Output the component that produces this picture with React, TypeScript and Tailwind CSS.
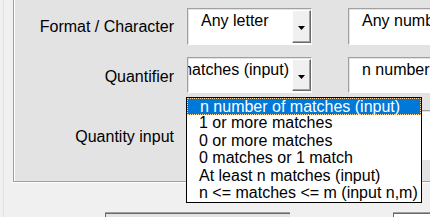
const options = [
  "n number of matches (input)",
  "1 or more matches",
  "0 or more matches",
  "0 matches or 1 match",
  "At least n matches (input)",
  "n <= matches <= m (input n,m)",
];

function Arrow() {
  return (
    <svg width="7" height="4" viewBox="0 0 7 4" className="block">
      <path d="M0 0h7L3.5 4z" fill="#000" />
    </svg>
  );
}

function Combo({ value, alignEnd }: { value: string; alignEnd?: boolean }) {
  return (
    <div className="flex h-full w-[125px] shrink-0 border border-[#a0a0a0] border-b-white border-r-white bg-white shadow-[inset_1px_1px_0_#e3e3e3]">
      <div
        className={`flex min-w-0 flex-1 overflow-hidden whitespace-nowrap pt-[3px] ${
          alignEnd ? "justify-end pr-[3px]" : "pl-[13px]"
        }`}
      >
        <span className="shrink-0">{value}</span>
      </div>
      <div className="my-[1px] flex w-[19px] shrink-0 items-center justify-center border border-white border-b-[#696969] border-r-[#696969] bg-[#f0f0f0] pt-[3px] shadow-[inset_-1px_-1px_0_#a0a0a0]">
        <Arrow />
      </div>
    </div>
  );
}

function Field({ children, className = "" }: { children?: React.ReactNode; className?: string }) {
  return (
    <div
      className={`shrink-0 overflow-hidden whitespace-nowrap border border-[#a0a0a0] border-b-white border-r-white bg-white pl-[13px] pt-[3px] shadow-[inset_1px_1px_0_#e3e3e3] ${className}`}
    >
      {children}
    </div>
  );
}

export default function App() {
  return (
    <div className="relative h-[217px] w-[430px] overflow-hidden bg-[#f0f0f0] font-['Liberation_Sans',Arial,sans-serif] text-[16px] leading-[18px] text-black">
      <div className="absolute left-[3px] top-0 h-full w-px bg-[#e2e2e2]" />

      {/* group panel */}
      <div className="ml-[13px] h-[182px] w-[430px] border-b border-l border-[#a0a0a0] bg-[#e3e3e3] pt-[8px] shadow-[inset_1px_0_0_#fff,0_1px_0_#fff]">
        <div className="flex h-[37px] items-center">
          <div className="w-[160px] shrink-0 whitespace-nowrap pt-[1px] text-right">Format / Character</div>
          <div className="ml-[13px] h-full shrink-0">
            <Combo value="Any letter" />
          </div>
          <Field className="ml-[36px] h-full w-[120px]">Any number</Field>
        </div>

        <div className="mt-[12px] flex h-[36px] items-center">
          <div className="w-[160px] shrink-0 pt-[3px] text-right">Quantifier</div>
          <div className="ml-[13px] h-full shrink-0">
            <Combo value="n number of matches (input)" alignEnd />
          </div>
          <Field className="ml-[36px] h-full w-[120px]">
            n number <span className="text-[#e8956a]">o</span>f
          </Field>
        </div>

        <div className="mt-[17px] flex h-[50px] items-center">
          <div className="w-[160px] shrink-0 pt-[4px] text-right">Quantity input</div>
          <Field className="ml-[13px] h-full w-[260px]" />
        </div>
      </div>

      {/* bottom controls */}
      <div className="mt-[31px] flex">
        <div className="ml-[105px] h-[10px] w-[185px] shrink-0 border-l border-t border-[#696969] bg-[#e3e3e3] shadow-[0_-1px_0_#a0a0a0]" />
        <div className="ml-[103px] h-[10px] w-[60px] shrink-0 border-l border-t border-[#696969] bg-white shadow-[0_-1px_0_#a0a0a0]" />
      </div>

      {/* open dropdown list */}
      <div className="absolute left-[186px] top-[97px] w-[236px] border border-black bg-white">
        {options.map((o, i) => (
          <div
            key={o}
            className={`h-[17.4px] whitespace-nowrap pl-[12px] leading-[16px] ${
              i === 0 ? "border border-dotted border-[#ffd9a0] bg-[#0078d7] pl-[11px] text-white" : ""
            }`}
          >
            {o}
          </div>
        ))}
      </div>
    </div>
  );
}
